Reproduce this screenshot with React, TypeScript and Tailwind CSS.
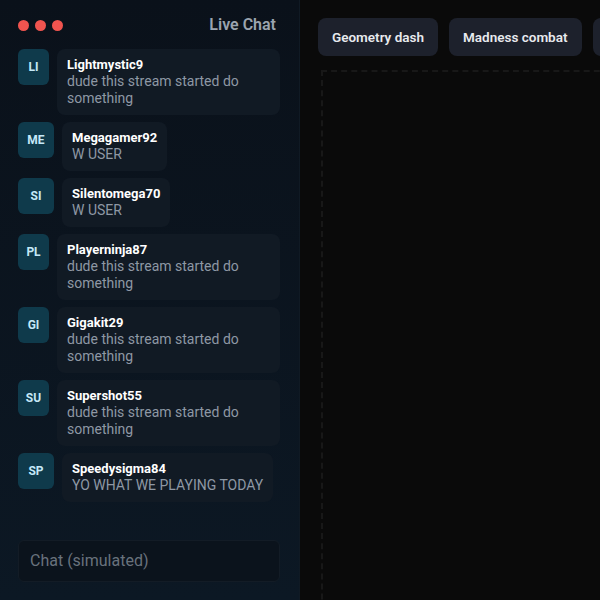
import React from "react";

const msgs = [
  { a: "LI", n: "Lightmystic9", m: "dude this stream started do something", long: true },
  { a: "ME", n: "Megagamer92", m: "W USER", long: false },
  { a: "SI", n: "Silentomega70", m: "W USER", long: false },
  { a: "PL", n: "Playerninja87", m: "dude this stream started do something", long: true },
  { a: "GI", n: "Gigakit29", m: "dude this stream started do something", long: true },
  { a: "SU", n: "Supershot55", m: "dude this stream started do something", long: true },
  { a: "SP", n: "Speedysigma84", m: "YO WHAT WE PLAYING TODAY", long: false },
];

export default function App() {
  return (
    <div
      className="flex h-[600px] w-[600px] overflow-hidden bg-[#0a0a0a]"
      style={{ fontFamily: "Roboto, 'Noto Sans', sans-serif" }}
    >
      <aside className="flex w-[300px] shrink-0 flex-col border-r border-[#101a24] bg-gradient-to-b from-[#0a111a] to-[#0c1824] pb-[18px] pl-[18px] pr-[19px]">
        <div className="flex h-[49px] items-center justify-between pt-px">
          <div className="flex gap-[6px]">
            <span className="h-[11px] w-[11px] rounded-full bg-[#f0544f]" />
            <span className="h-[11px] w-[11px] rounded-full bg-[#f0544f]" />
            <span className="h-[11px] w-[11px] rounded-full bg-[#f0544f]" />
          </div>
          <span className="pr-[4px] text-[16px] font-semibold text-[#9ba4af]">Live Chat</span>
        </div>
        <div className="flex flex-col gap-[7px]">
          {msgs.map((x) => (
            <div key={x.n} className="flex items-start gap-[8px]">
              <div
                className={
                  x.long
                    ? "flex h-[36px] w-[31px] shrink-0 items-center justify-center rounded-md bg-[#0f3a4b] text-[12px] font-bold text-[#c4e8f7]"
                    : "flex h-[36px] w-[36px] shrink-0 items-center justify-center rounded-md bg-[#0f3a4b] text-[12px] font-bold text-[#c4e8f7]"
                }
              >
                {x.a}
              </div>
              <div
                className={
                  x.long
                    ? "min-w-0 flex-1 rounded-lg bg-[#111a24] px-[10px] pb-[8px] pt-[8px]"
                    : "min-w-0 rounded-lg bg-[#111a24] px-[10px] pb-[8px] pt-[8px]"
                }
              >
                <div className="text-[13px] font-bold leading-[16px] text-white">{x.n}</div>
                <div className="text-[14px] leading-[17px] text-[#8e98a4]">{x.m}</div>
              </div>
            </div>
          ))}
        </div>
        <div className="mt-auto flex h-[42px] items-center rounded-md border border-[#131c26] bg-[#0b131c] px-[11px] text-[16px] text-[#69727c]">
          Chat (simulated)
        </div>
      </aside>
      <main className="flex min-w-0 flex-1 flex-col overflow-hidden pl-[18px] pt-[18px]">
        <div className="flex gap-[11px] whitespace-nowrap">
          <button className="h-[38px] shrink-0 rounded-lg bg-[#1d212c] px-[14px] text-[13.5px] font-semibold text-[#e8eaee]">
            Geometry dash
          </button>
          <button className="h-[38px] shrink-0 rounded-lg bg-[#1d212c] px-[14px] text-[13.5px] font-semibold text-[#e8eaee]">
            Madness combat
          </button>
          <button className="h-[38px] shrink-0 rounded-lg bg-[#1d212c] px-[14px] text-[13.5px] font-semibold text-[#e8eaee]">
            Fnaf
          </button>
        </div>
        <div className="ml-[3px] mt-[14px] h-[600px] w-[400px] shrink-0 border-l-2 border-t-2 border-dashed border-[#181818]" />
      </main>
    </div>
  );
}
